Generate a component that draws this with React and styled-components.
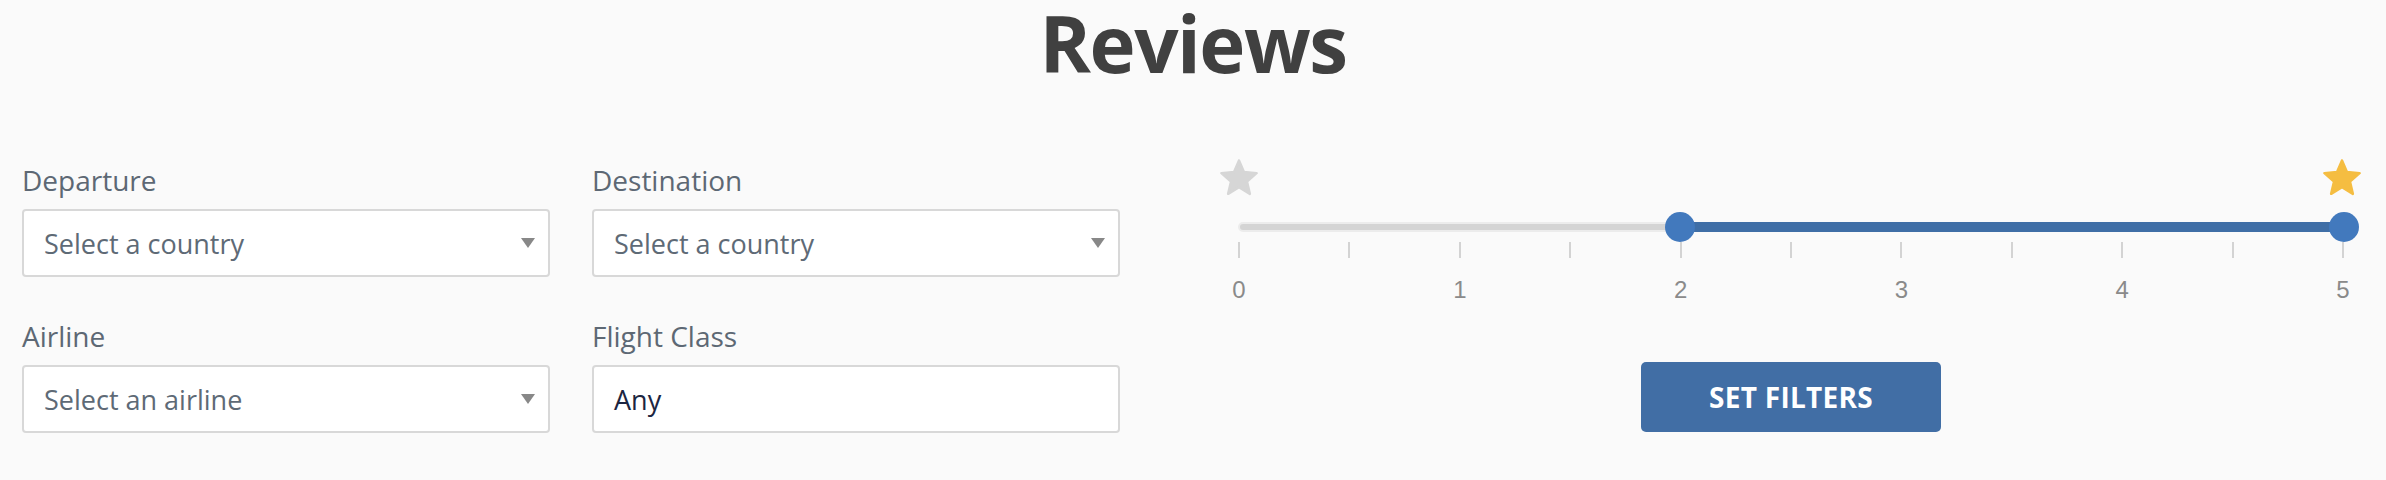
import styled, { createGlobalStyle } from "styled-components";

const GlobalStyle = createGlobalStyle`
  html, body {
    margin: 0;
    padding: 0;
    background: #fafafa;
  }
  body {
    font-family: "Open Sans", "Noto Sans", sans-serif;
  }
`;

const Page = styled.div`
  width: 2386px;
  height: 480px;
  box-sizing: border-box;
  padding: 0 22px;
  background: #fafafa;
`;

const Title = styled.h1`
  margin: 0;
  font-size: 78px;
  line-height: 86px;
  font-weight: 700;
  letter-spacing: -1.5px;
  color: #404040;
  text-align: center;
`;

const Filters = styled.div`
  display: flex;
  align-items: flex-start;
  margin-top: 73px;
`;

const Fields = styled.div`
  display: grid;
  grid-template-columns: 528px 528px;
  column-gap: 42px;
  row-gap: 40px;
  padding-top: 2px;
`;

const Field = styled.div`
  display: flex;
  flex-direction: column;
  gap: 10px;
`;

const Label = styled.label`
  font-size: 28px;
  line-height: 38px;
  color: #5d6874;
`;

const Box = styled.div`
  height: 68px;
  box-sizing: border-box;
  display: flex;
  align-items: center;
  justify-content: space-between;
  padding: 0 13px 0 20px;
  background: #fff;
  border: 2px solid #d8d8d8;
  border-radius: 4px;
  font-size: 27px;
  color: ${(props) => (props.filled ? "#1c2541" : "#5e6a76")};
`;

const Caret = styled.span`
  width: 0;
  height: 0;
  border-left: 7.5px solid transparent;
  border-right: 7.5px solid transparent;
  border-top: 10px solid #888;
`;

const RatingPanel = styled.div`
  flex: 1;
  margin-left: 100px;
  padding: 0 20px 0 18px;
`;

const StarRow = styled.div`
  display: flex;
  justify-content: space-between;
  height: 38px;
  margin: 0 -17px 0 -18px;
`;

const Rail = styled.div`
  position: relative;
  height: 30px;
  margin-top: 15px;
`;

const Track = styled.div`
  position: absolute;
  left: 0;
  right: 0;
  top: 10px;
  height: 10px;
  box-sizing: border-box;
  border: 2px solid #ececec;
  border-radius: 5px;
  background: #d4d4d4;
`;

const Range = styled.div`
  position: absolute;
  right: 0;
  top: 10px;
  height: 10px;
  background: #3f6ea6;
`;

const Handle = styled.div`
  position: absolute;
  top: 50%;
  width: 30px;
  height: 30px;
  border-radius: 50%;
  background: #4279bd;
  transform: translate(-50%, -50%);
`;

const Ticks = styled.div`
  display: flex;
  justify-content: space-between;
  height: 16px;
`;

const Tick = styled.span`
  width: 2px;
  height: 16px;
  background: #d3d3d3;
`;

const Marks = styled.div`
  display: flex;
  justify-content: space-between;
  margin-top: 18px;
  padding: 0 1px;
`;

const Mark = styled.span`
  width: 0;
  display: flex;
  justify-content: center;
  font-family: "Liberation Sans", Arial, sans-serif;
  font-size: 24px;
  line-height: 27px;
  color: #8a8a8a;
`;

const ButtonRow = styled.div`
  display: flex;
  justify-content: center;
  margin-top: 59px;
`;

const Button = styled.button`
  width: 300px;
  height: 70px;
  border: none;
  border-radius: 5px;
  background: #416ea5;
  color: #fff;
  font-family: "Open Sans", "Noto Sans", sans-serif;
  font-size: 28px;
  font-weight: 700;
  letter-spacing: 0.3px;
  cursor: pointer;
`;

const Star = ({ color }) => (
  <svg width="38" height="38" viewBox="1.2 1.2 21.6 21.6">
    <path
      d="M12 17.27L18.18 21l-1.64-7.03L22 9.24l-7.19-.61L12 2 9.19 8.63 2 9.24l5.46 4.73L5.82 21z"
      fill={color}
      stroke={color}
      strokeWidth="1.4"
      strokeLinejoin="round"
    />
  </svg>
);

const fields = [
  { label: "Departure", value: "Select a country", select: true },
  { label: "Destination", value: "Select a country", select: true },
  { label: "Airline", value: "Select an airline", select: true },
  { label: "Flight Class", value: "Any", select: false },
];

const MIN = 0;
const MAX = 5;
const low = 2;
const high = 5;

const App = () => {
  const pct = (v) => ((v - MIN) / (MAX - MIN)) * 100;
  return (
    <Page>
      <GlobalStyle />
      <Title>Reviews</Title>
      <Filters>
        <Fields>
          {fields.map((f) => (
            <Field key={f.label}>
              <Label>{f.label}</Label>
              <Box filled={!f.select}>
                <span>{f.value}</span>
                {f.select && <Caret />}
              </Box>
            </Field>
          ))}
        </Fields>

        <RatingPanel>
          <StarRow>
            <Star color="#d6d6d6" />
            <Star color="#f5bd41" />
          </StarRow>
          <Rail>
            <Track />
            <Range style={{ left: `${pct(low)}%`, right: `${100 - pct(high)}%` }} />
            <Handle style={{ left: `${pct(low)}%` }} />
            <Handle style={{ left: `${pct(high)}%` }} />
          </Rail>
          <Ticks>
            {Array.from({ length: 11 }).map((_, i) => (
              <Tick key={i} />
            ))}
          </Ticks>
          <Marks>
            {[0, 1, 2, 3, 4, 5].map((n) => (
              <Mark key={n}>{n}</Mark>
            ))}
          </Marks>
          <ButtonRow>
            <Button>SET FILTERS</Button>
          </ButtonRow>
        </RatingPanel>
      </Filters>
    </Page>
  );
};

export default App;
